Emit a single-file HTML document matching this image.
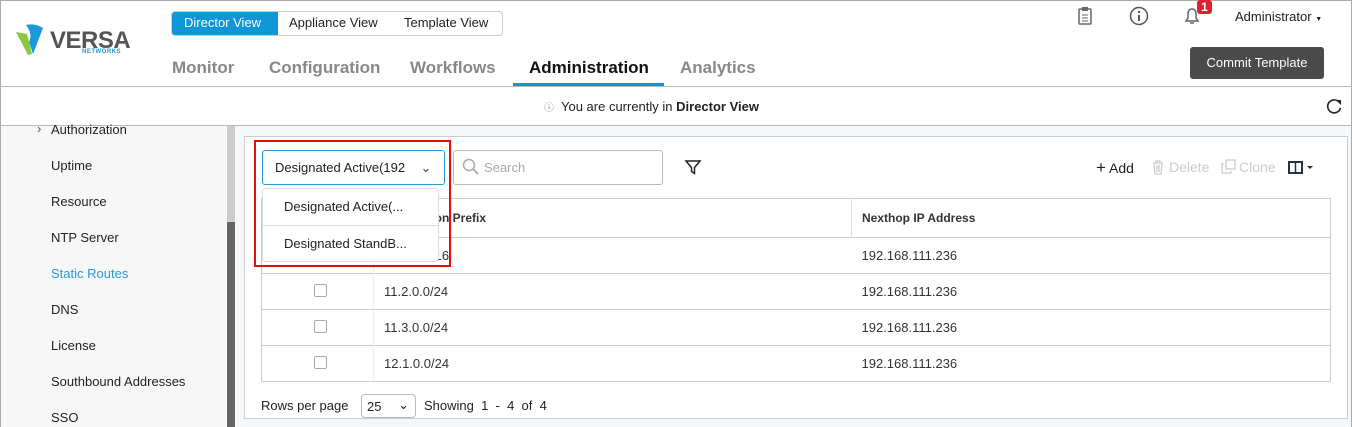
<!DOCTYPE html>
<html><head><style>
*{box-sizing:border-box;margin:0;padding:0}
body{width:1352px;height:427px;overflow:hidden;font-family:"Liberation Sans",sans-serif;background:#fff;position:relative;color:#222;font-size:13px}
.a{position:absolute}
.outer{position:absolute;left:0;top:0;width:1352px;height:427px;border:1px solid #aaa;border-bottom:none}
.nav{font-size:17px;color:#888;top:58px;font-weight:bold}
.side div{position:absolute;left:50px;font-size:13px;color:#222}
td{border-top:1px solid #ccc;height:36px;font-size:13px;color:#333;padding-left:10px}
</style></head><body>
<div class="outer"></div>
<svg class="a" style="left:15px;top:22px" width="30" height="34" viewBox="0 0 30 34"><path d="M1 10 L12 12 L17 32 L13 33 Z" fill="#8dc63f"/><path d="M11 3 Q20 1 28 6 L18 32 L14 20 Q18 12 11 3Z" fill="#1a9ad6"/></svg>
<div class="a" style="left:50px;top:27px;font-size:24px;font-weight:bold;color:#555;letter-spacing:-.5px">VERSA</div>
<div class="a" style="left:82px;top:49px;font-size:6px;font-weight:bold;color:#1a9ad6;letter-spacing:.5px">NETWORKS</div>
<div class="a" style="left:171px;top:11px;width:332px;height:25px;border:1px solid #ccc;border-radius:4px;overflow:hidden;font-size:13px">
<div class="a" style="left:0;top:0;width:106px;height:23px;background:#0f96d8;color:#fff;padding:3px 0 0 12px">Director View</div>
<div class="a" style="left:117px;top:3px">Appliance View</div>
<div class="a" style="left:232px;top:3px">Template View</div>
</div>
<div class="a nav" style="left:172px">Monitor</div>
<div class="a nav" style="left:269px">Configuration</div>
<div class="a nav" style="left:410px">Workflows</div>
<div class="a nav" style="left:529px;color:#111">Administration</div>
<div class="a" style="left:513px;top:83px;width:151px;height:3px;background:#0f96d8"></div>
<div class="a nav" style="left:680px">Analytics</div>
<div class="a" style="left:0;top:86px;width:1352px;height:1px;background:#bbb"></div>
<svg class="a" style="left:1077px;top:6px" width="16" height="20"><rect x="2" y="3" width="12" height="15" rx="1" fill="none" stroke="#666" stroke-width="1.5"/><rect x="5" y="1" width="6" height="4" fill="#666"/><path d="M5 9h6M5 12h6M5 15h6" stroke="#666"/></svg>
<svg class="a" style="left:1129px;top:6px" width="20" height="20"><circle cx="10" cy="10" r="8.5" fill="none" stroke="#555" stroke-width="1.5"/><circle cx="10" cy="6" r="1.2" fill="#555"/><path d="M10 9v6" stroke="#555" stroke-width="2"/></svg>
<svg class="a" style="left:1183px;top:6px" width="18" height="20"><path d="M3 15 L5 12 V8 Q5 3 9 3 Q13 3 13 8 V12 L15 15 Z" fill="none" stroke="#666" stroke-width="1.5"/><path d="M7 17h4" stroke="#666" stroke-width="1.5"/></svg>
<div class="a" style="left:1197px;top:0;width:15px;height:14px;background:#e02030;color:#fff;font-size:12px;font-weight:bold;text-align:center;border-radius:3px">1</div>
<div class="a" style="left:1235px;top:9px;font-size:13px">Administrator <span style="font-size:7px">▼</span></div>
<div class="a" style="left:1190px;top:47px;width:134px;height:32px;background:#4a4a4a;border-radius:3px;color:#fff;font-size:13px;text-align:center;line-height:32px">Commit Template</div>
<div class="a" style="left:544px;top:99px;font-size:13px"><span style="font-size:10px;color:#888">ⓘ</span>&nbsp; You are currently in <b>Director View</b></div>
<svg class="a" style="left:1325px;top:97px" width="18" height="18"><path d="M14 5 A6.5 6.5 0 1 0 15.5 11" fill="none" stroke="#222" stroke-width="1.6"/><path d="M11 3h5v5z" fill="#222"/></svg>
<div class="a" style="left:0;top:125px;width:1352px;height:1px;background:#bbb"></div>
<div class="a side" style="left:1px;top:126px;width:227px;height:301px;background:#f7f7f7">
<div style="top:-5px;left:36px;color:#555">›</div>
<div style="top:-4px">Authorization</div>
<div style="top:32px">Uptime</div>
<div style="top:68px">Resource</div>
<div style="top:104px">NTP Server</div>
<div style="top:140px;color:#2a9ad6">Static Routes</div>
<div style="top:176px">DNS</div>
<div style="top:212px">License</div>
<div style="top:248px">Southbound Addresses</div>
<div style="top:284px">SSO</div>
</div>
<div class="a" style="left:227px;top:126px;width:8px;height:301px;background:#ccc"></div>
<div class="a" style="left:227px;top:222px;width:8px;height:205px;background:#666"></div>
<div class="a" style="left:235px;top:126px;width:1116px;height:301px;background:#f5f8fb"></div>
<div class="a" style="left:244px;top:136px;width:1104px;height:283px;background:#fff;border:1px solid #ccc"></div>
<div class="a" style="left:262px;top:150px;width:183px;height:35px;border:1px solid #2a9ad6;border-radius:3px;background:#fff;font-size:13px;padding:9px 0 0 12px;overflow:hidden;white-space:nowrap">Designated Active(192<span class="a" style="right:0;top:0;width:36px;height:33px;background:#fff;text-align:center;line-height:33px;color:#444">⌄</span></div>
<div class="a" style="left:453px;top:150px;width:210px;height:35px;border:1px solid #bbb;border-radius:3px"></div>
<svg class="a" style="left:462px;top:158px" width="18" height="18"><circle cx="7" cy="7" r="5.5" fill="none" stroke="#aaa" stroke-width="1.5"/><path d="M11 11l5 5" stroke="#aaa" stroke-width="1.8"/></svg>
<div class="a" style="left:484px;top:160px;color:#aaa;font-size:13px">Search</div>
<svg class="a" style="left:684px;top:158px" width="18" height="18"><path d="M2 3h14l-5.5 6.5v6l-3-2v-4z" fill="none" stroke="#222" stroke-width="1.5"/></svg>
<div class="a" style="left:1096px;top:158px;font-size:14px;color:#222"><span style="font-size:17px">+</span> Add</div>
<svg class="a" style="left:1151px;top:159px" width="14" height="16"><path d="M2 4h10M5 4V2h4v2M3 4l1 11h6l1-11M6 6v7M8 6v7" fill="none" stroke="#ccc" stroke-width="1.3"/></svg>
<div class="a" style="left:1169px;top:159px;font-size:14px;color:#ccc">Delete</div>
<svg class="a" style="left:1221px;top:159px" width="16" height="16"><rect x="5" y="1" width="9" height="9" fill="none" stroke="#ccc" stroke-width="1.3"/><path d="M3 5H1v9h9v-2" fill="none" stroke="#ccc" stroke-width="1.3"/></svg>
<div class="a" style="left:1239px;top:159px;font-size:14px;color:#ccc">Clone</div>
<svg class="a" style="left:1288px;top:160px" width="30" height="16"><rect x="1" y="2" width="13" height="11" fill="none" stroke="#234" stroke-width="2"/><path d="M7.5 2v11" stroke="#234" stroke-width="1.5"/><path d="M19 6h6l-3 3z" fill="#234"/></svg>
<table class="a" style="left:261px;top:198px;width:1070px;border:1px solid #ccc;border-collapse:collapse">
<tr><td style="height:39px;border-right:1px solid #ddd;width:112px"></td><td style="border-right:1px solid #ddd;width:478px;font-weight:bold;font-size:12px">Destination Prefix</td><td style="font-weight:bold;font-size:12px">Nexthop IP Address</td></tr>
<tr><td style="border-right:1px solid #eee"></td><td>10.2.0.0/16</td><td>192.168.111.236</td></tr>
<tr><td style="border-right:1px solid #eee;padding-left:52px"><span style="display:inline-block;width:13px;height:13px;border:1px solid #aaa;border-radius:2px"></span></td><td>11.2.0.0/24</td><td>192.168.111.236</td></tr>
<tr><td style="border-right:1px solid #eee;padding-left:52px"><span style="display:inline-block;width:13px;height:13px;border:1px solid #aaa;border-radius:2px"></span></td><td>11.3.0.0/24</td><td>192.168.111.236</td></tr>
<tr><td style="border-right:1px solid #eee;padding-left:52px"><span style="display:inline-block;width:13px;height:13px;border:1px solid #aaa;border-radius:2px"></span></td><td>12.1.0.0/24</td><td>192.168.111.236</td></tr>
</table>
<div class="a" style="left:262px;top:188px;width:177px;height:74px;background:#fff;border:1px solid #ddd;border-radius:4px;font-size:13px">
<div class="a" style="left:21px;top:10px">Designated Active(...</div>
<div class="a" style="left:0;top:36px;width:175px;height:1px;background:#ddd"></div>
<div class="a" style="left:21px;top:47px">Designated StandB...</div>
</div>
<div class="a" style="left:254px;top:140px;width:197px;height:127px;border:2px solid #e01010"></div>
<div class="a" style="left:261px;top:398px;font-size:13px">Rows per page</div>
<div class="a" style="left:361px;top:394px;width:55px;height:24px;border:1px solid #bbb;border-radius:4px;font-size:13px;padding:4px 0 0 5px">25 <span style="position:absolute;right:6px;top:2px">⌄</span></div>
<div class="a" style="left:424px;top:398px;font-size:13px">Showing &nbsp;1 &nbsp;- &nbsp;4 &nbsp;of &nbsp;4</div>
</body></html>
